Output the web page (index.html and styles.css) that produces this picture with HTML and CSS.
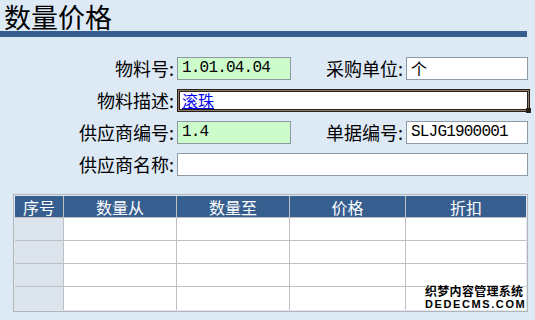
FILE: index.html
```html
<!DOCTYPE html>
<html lang="zh-CN">
<head>
    <meta charset="UTF-8">
    <title>数量价格</title>
    <link rel="stylesheet" href="styles.css">
</head>
<body>
    <h1 class="page-title">数量价格</h1>

    <div class="form-grid">
        <label class="label">物料号:</label>
        <div class="field field-locked">1.01.04.04</div>
        <label class="label">采购单位:</label>
        <div class="field field-cjk">个</div>

        <label class="label">物料描述:</label>
        <div class="field field-wide field-focus"><a href="#" class="link">滚珠</a><span class="grip"></span></div>

        <label class="label">供应商编号:</label>
        <div class="field field-locked">1.4</div>
        <label class="label">单据编号:</label>
        <div class="field">SLJG1900001</div>

        <label class="label">供应商名称:</label>
        <div class="field field-wide"></div>
    </div>

    <table class="price-table">
        <thead>
            <tr>
                <th class="col-no">序号</th>
                <th class="col-from">数量从</th>
                <th class="col-to">数量至</th>
                <th class="col-price">价格</th>
                <th class="col-disc">折扣</th>
            </tr>
        </thead>
        <tbody>
            <tr><td class="row-head"></td><td></td><td></td><td></td><td></td></tr>
            <tr><td class="row-head"></td><td></td><td></td><td></td><td></td></tr>
            <tr><td class="row-head"></td><td></td><td></td><td></td><td></td></tr>
            <tr><td class="row-head"></td><td></td><td></td><td></td><td></td></tr>
        </tbody>
    </table>

    <div class="watermark">
        <div class="wm-cn">织梦内容管理系统</div>
        <div class="wm-en">DEDECMS.COM</div>
    </div>
</body>
</html>
```

FILE: styles.css
```css
body {
    margin: 0;
    background-color: #dde9f5;
    font-family: "Noto Sans CJK SC", sans-serif;
    color: #000;
}
.page-title {
    margin: 0;
    width: 527px;
    box-sizing: border-box;
    padding: 3px 0 1px 4px;
    font-size: 27px;
    font-weight: normal;
    line-height: 27px;
    border-bottom: 6px solid #365f90;
}
.form-grid {
    margin-top: 20px;
    display: grid;
    grid-template-columns: 177px 114px 115px 122px;
    grid-auto-rows: 23px;
    row-gap: 9px;
}
.label {
    text-align: right;
    padding-right: 3px;
    font-size: 18px;
    line-height: 23px;
    white-space: nowrap;
}
.field {
    position: relative;
    box-sizing: border-box;
    height: 23px;
    background-color: #fff;
    border: 1px solid #8e9aa6;
    padding-left: 4px;
    font-family: "Liberation Mono", monospace;
    font-size: 16px;
    letter-spacing: -0.8px;
    line-height: 21px;
}
.field-locked {
    background-color: #ccfccc;
}
.field-cjk {
    font-family: "Noto Sans CJK SC", sans-serif;
    letter-spacing: 0;
}
.field-wide {
    grid-column: 2 / 5;
}
.field-focus {
    margin-right: -2px;
    border: 1px solid #2a1f16;
    box-shadow: inset 0 0 0 1px #8c7c6c, inset 0 0 0 2px #2a1f16;
    padding-left: 4px;
}
.link {
    color: #0000ee;
    font-family: "Noto Sans CJK SC", sans-serif;
    font-size: 16px;
    letter-spacing: 0;
    text-decoration: underline;
}
.grip {
    position: absolute;
    right: -2px;
    bottom: -2px;
    width: 5px;
    height: 5px;
    background-color: #2a1f16;
}
.price-table {
    margin: 18px 0 0 13px;
    width: 515px;
    table-layout: fixed;
    border-collapse: separate;
    border-spacing: 0;
    border: 1px solid #b4b4b4;
    padding: 1px;
}
.price-table th,
.price-table td {
    box-sizing: border-box;
    padding: 0;
    border-right: 1px solid #c0c0c0;
    border-bottom: 1px solid #c0c0c0;
}
.price-table th:last-child,
.price-table td:last-child {
    border-right: none;
}
.price-table tr:last-child td {
    border-bottom: none;
}
.price-table th {
    height: 22px;
    background-color: #365f90;
    color: #fff;
    font-size: 16px;
    font-weight: normal;
    line-height: 20px;
}
.price-table td {
    height: 23px;
    background-color: #fff;
}
.price-table td.row-head {
    background-color: #dce4ee;
}
.col-no { width: 49px; }
.col-from { width: 113px; }
.col-to { width: 113px; }
.col-price { width: 116px; }
.col-disc { width: 120px; }
.watermark {
    position: absolute;
    left: 425px;
    top: 284px;
    width: 100px;
    font-weight: bold;
    color: #000;
    text-shadow: 1px 0 #fff, -1px 0 #fff, 0 1px #fff, 0 -1px #fff;
}
.wm-cn {
    font-size: 12px;
    line-height: 14px;
    letter-spacing: 0.3px;
}
.wm-en {
    font-family: "Liberation Sans", sans-serif;
    font-size: 11px;
    line-height: 12px;
    letter-spacing: 1.6px;
}
```
